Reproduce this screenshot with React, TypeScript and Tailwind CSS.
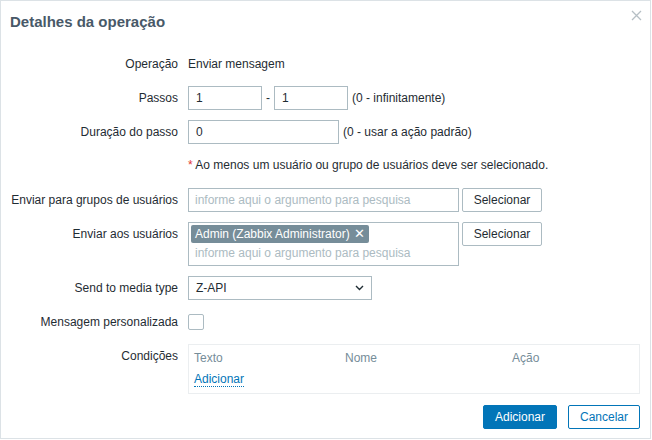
import React from "react";

const font = { fontFamily: '"Liberation Sans", Arial, sans-serif' };

function Row({ label, children, top = false }: { label: string; children: React.ReactNode; top?: boolean }) {
  return (
    <>
      <div className={`flex justify-end text-right ${top ? "items-start pt-[5px]" : "items-center"} min-h-[24px]`}>
        {label}
      </div>
      <div className="flex items-center min-h-[24px]">{children}</div>
    </>
  );
}

function TextInput({ value, width }: { value?: string; width: string }) {
  return (
    <div className={`${width} h-[24px] border border-[#acbbc2] bg-white px-[7px] flex items-center`}>
      {value}
    </div>
  );
}

function SelectButton() {
  return (
    <button className="ml-[3px] h-[24px] w-[80px] border border-[#acbbc2] rounded-[2px] bg-white text-[#1f2c33]">
      Selecionar
    </button>
  );
}

export default function App() {
  return (
    <div style={font} className="w-[651px] h-[439px] border border-[#dce2e6] bg-white text-[12px] text-[#1f2c33] flex flex-col">
      <div className="relative h-[42px] flex items-center px-[9px]">
        <h4 className="text-[15px] font-bold text-[#485968]">Detalhes da operação</h4>
        <svg className="absolute right-[8px] top-[9px]" width="11" height="11" viewBox="0 0 11 11">
          <path d="M1 1L10 10M10 1L1 10" stroke="#b6bfc5" strokeWidth="1.3" />
        </svg>
      </div>

      <div className="grid grid-cols-[177px_1fr] gap-x-[10px] gap-y-[10px] mt-[9px] leading-[14px]">
        <Row label="Operação">Enviar mensagem</Row>

        <Row label="Passos">
          <TextInput value="1" width="w-[74px]" />
          <span className="px-[4px]">-</span>
          <TextInput value="1" width="w-[74px]" />
          <span className="ml-[4px]">(0 - infinitamente)</span>
        </Row>

        <Row label="Duração do passo">
          <TextInput value="0" width="w-[151px]" />
          <span className="ml-[4px]">(0 - usar a ação padrão)</span>
        </Row>

        <Row label="">
          <span className="pt-[1px] pb-[4px]">
            <span className="text-[#e33734]">*</span> Ao menos um usuário ou grupo de usuários deve ser selecionado.
          </span>
        </Row>

        <Row label="Enviar para grupos de usuários">
          <div className="w-[271px] h-[24px] border border-[#acbbc2] px-[6px] flex items-center text-[#acbbc2]">
            informe aqui o argumento para pesquisa
          </div>
          <SelectButton />
        </Row>

        <Row label="Enviar aos usuários" top>
          <div className="self-start w-[271px] h-[44px] border border-[#acbbc2] px-[2px] pt-[2px] flex flex-col">
            <span className="self-start h-[18px] px-[4px] rounded-[2px] bg-[#768d99] text-white flex items-center">
              Admin (Zabbix Administrator) <span className="ml-[4px] text-[13px]">✕</span>
            </span>
            <span className="px-[4px] mt-[3px] text-[#acbbc2]">informe aqui o argumento para pesquisa</span>
          </div>
          <div className="self-start">
            <SelectButton />
          </div>
        </Row>

        <Row label="Send to media type">
          <div className="w-[184px] h-[24px] border border-[#acbbc2] px-[7px] flex items-center justify-between">
            Z-API
            <svg width="9" height="6" viewBox="0 0 9 6">
              <path d="M1 1L4.5 4.5L8 1" stroke="#1f2c33" strokeWidth="1.4" fill="none" />
            </svg>
          </div>
        </Row>

        <Row label="Mensagem personalizada">
          <div className="w-[16px] h-[16px] border border-[#acbbc2] rounded-[2px]" />
        </Row>

        <Row label="Condições" top>
          <div className="w-[452px] h-[50px] border border-[#ebeef0] px-[5px] pt-[5px]">
            <div className="grid grid-cols-[151px_167px_1fr] text-[#768d99] h-[16px] items-center">
              <span>Texto</span>
              <span>Nome</span>
              <span>Ação</span>
            </div>
            <div className="mt-[6px]">
              <a className="text-[#0275b8] border-b border-dotted border-[#0275b8] cursor-pointer">Adicionar</a>
            </div>
          </div>
        </Row>
      </div>

      <div className="mt-[11px] flex justify-end gap-[11px] pr-[10px]">
        <button className="h-[24px] w-[74px] rounded-[2px] bg-[#0275b8] border border-[#0275b8] text-white">Adicionar</button>
        <button className="h-[24px] w-[72px] rounded-[2px] bg-white border border-[#0275b8] text-[#0275b8]">Cancelar</button>
      </div>
    </div>
  );
}
